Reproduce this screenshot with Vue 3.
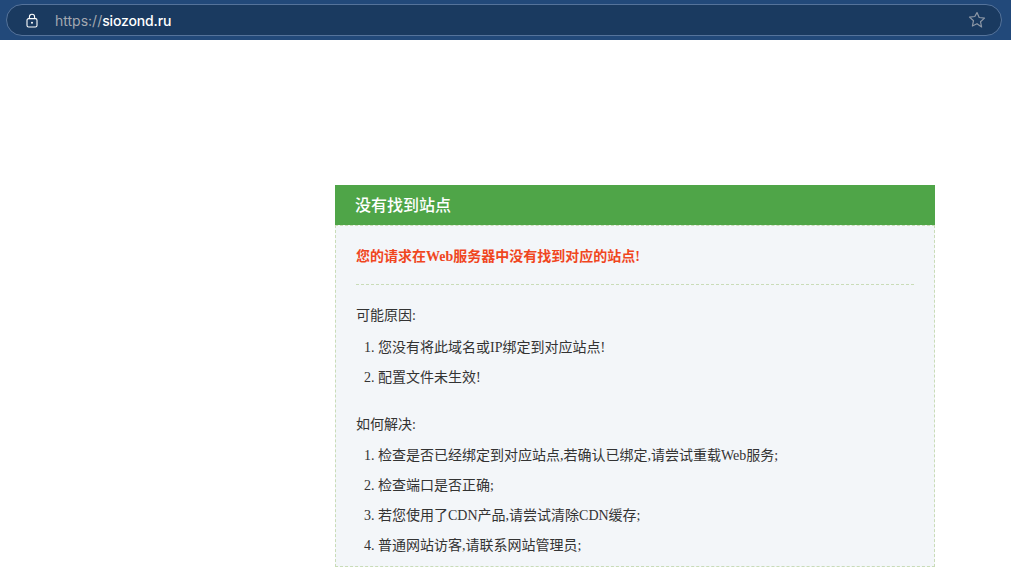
<script setup>
const reasons = ['您没有将此域名或IP绑定到对应站点!', '配置文件未生效!']
const fixes = ['检查是否已经绑定到对应站点,若确认已绑定,请尝试重载Web服务;', '检查端口是否正确;', '若您使用了CDN产品,请尝试清除CDN缓存;', '普通网站访客,请联系网站管理员;']
</script>

<template>
  <div class="page">
    <header class="browser">
      <div class="urlbar">
        <svg class="lock" width="12" height="15" viewBox="0 0 12 15" fill="none">
          <path d="M3.4 6V3.9a2.6 2.6 0 0 1 5.2 0V6" stroke="#fff" stroke-width="1.1"/>
          <rect x="1" y="5.6" width="10" height="8.4" rx="1.6" stroke="#fff" stroke-width="1.1"/>
          <circle cx="6" cy="9.8" r="1" fill="#fff"/>
        </svg>
        <span class="url"><span class="scheme">https://</span><span class="domain">siozond.ru</span></span>
        <svg class="star" width="18" height="18" viewBox="0 0 18 18" fill="none">
          <path d="M9 1.6l2.2 4.9 5.3.6-4 3.6 1.1 5.3L9 12.7l-4.6 2.3 1.1-5.3-4-3.6 5.3-.6z" stroke="#8e98a6" stroke-width="1.2" stroke-linejoin="round"/>
        </svg>
      </div>
    </header>
    <main class="card">
      <h1 class="title">没有找到站点</h1>
      <div class="body">
        <p class="alert">您的请求在Web服务器中没有找到对应的站点!</p>
        <hr class="rule" />
        <p class="label">可能原因:</p>
        <ol class="list first">
          <li v-for="r in reasons" :key="r">{{ r }}</li>
        </ol>
        <p class="label second">如何解决:</p>
        <ol class="list last">
          <li v-for="f in fixes" :key="f">{{ f }}</li>
        </ol>
      </div>
    </main>
  </div>
</template>

<style scoped>
.page {
  width: 1011px;
  height: 588px;
  overflow: hidden;
  background: #fff;
  font-family: "Liberation Serif", "Noto Sans CJK SC", serif;
}
.browser {
  height: 40px;
  box-sizing: border-box;
  padding: 4px 9px 4px 6px;
  background: #22497a;
}
.urlbar {
  height: 32px;
  box-sizing: border-box;
  display: flex;
  align-items: center;
  padding: 0 15px 0 19px;
  border: 1px solid #55739b;
  border-radius: 16px;
  background: #1a3a60;
}
.lock { flex: none; }
.url {
  margin-left: 17px;
  flex: 1;
  font: 400 14px "Inter", "Liberation Sans", sans-serif;
  color: #fff;
}
.scheme { color: #a3a8b0; }
.domain { font-weight: 500; letter-spacing: -0.15px; }
.star { flex: none; }
.card {
  width: 600px;
  margin: 145px 0 0 335px;
}
.title {
  margin: 0;
  height: 40px;
  padding-left: 20px;
  line-height: 41px;
  background: #4fa548;
  color: #fff;
  font-size: 16px;
  font-weight: 500;
}
.body {
  box-sizing: border-box;
  height: 342px;
  padding: 20px 20px 0;
  background: #f3f6f9;
  border: 1px dashed #c9dcb8;
  color: #333;
  font-size: 14px;
}
.alert {
  margin: 0;
  line-height: 22px;
  color: #f0461e;
  font-weight: 700;
}
.rule {
  margin: 16px 0 0;
  border: 0;
  border-top: 1px dashed #c9dcb8;
}
.label {
  margin: 20px 0 0;
  line-height: 22px;
}
.label.second { margin-top: 21px; }
.list {
  margin: 6px 0 0;
  padding: 0 0 0 22px;
}
.list.last { margin-top: 5px; }
.list li {
  height: 30px;
  line-height: 30px;
}
</style>
